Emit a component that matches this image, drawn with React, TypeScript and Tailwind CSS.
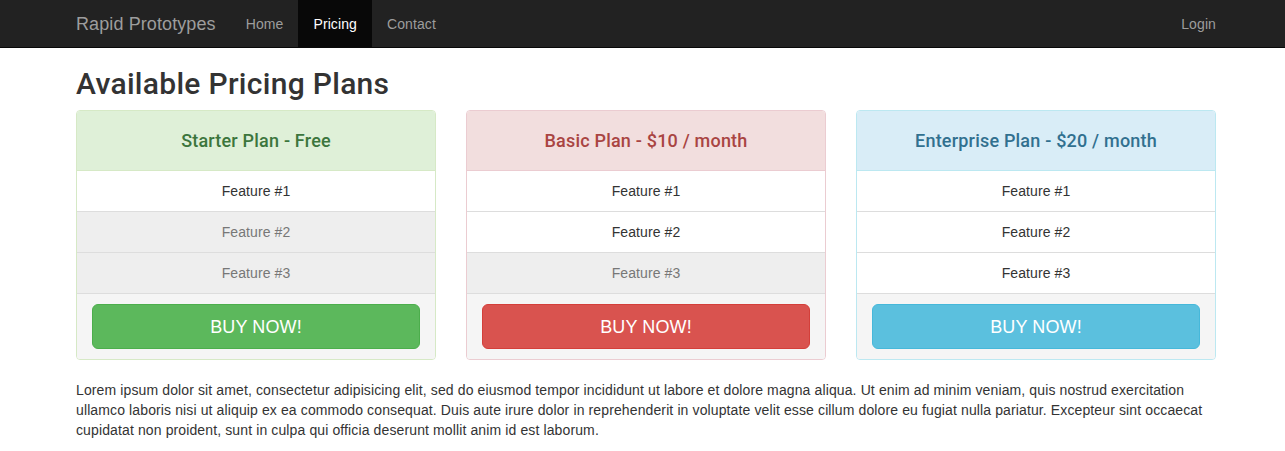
import React from "react";

const plans = [
  {
    title: "Starter Plan - Free",
    head: "bg-[#dff0d8] text-[#3c763d] border-[#d6e9c6]",
    border: "border-[#d6e9c6]",
    btn: "bg-[#5cb85c] border-[#4cae4c]",
    muted: [false, true, true],
  },
  {
    title: "Basic Plan - $10 / month",
    head: "bg-[#f2dede] text-[#a94442] border-[#ebccd1]",
    border: "border-[#ebccd1]",
    btn: "bg-[#d9534f] border-[#d43f3a]",
    muted: [false, false, true],
  },
  {
    title: "Enterprise Plan - $20 / month",
    head: "bg-[#d9edf7] text-[#31708f] border-[#bce8f1]",
    border: "border-[#bce8f1]",
    btn: "bg-[#5bc0de] border-[#46b8da]",
    muted: [false, false, false],
  },
];

const medium = { fontFamily: 'Roboto, "Liberation Sans", Arial, sans-serif' };

export default function App() {
  return (
    <div className="min-h-[451px] bg-white text-[#333] text-[14px] leading-[20px] tracking-[0.1px]" style={{ fontFamily: '"Liberation Sans", Arial, Helvetica, sans-serif' }}>
      <nav className="h-[48px] bg-[#222] border-b border-[#080808]">
        <div className="w-[1140px] ml-[76px] h-[47px] flex items-stretch">
          <a className="flex items-center pr-[15px] text-[18px] text-[#9d9d9d]">Rapid Prototypes</a>
          <ul className="flex items-stretch">
            <li className="flex items-center px-[15px] text-[#9d9d9d]">Home</li>
            <li className="flex items-center px-[15px] text-white bg-[#080808]">Pricing</li>
            <li className="flex items-center px-[15px] text-[#9d9d9d]">Contact</li>
          </ul>
          <ul className="flex items-stretch ml-auto">
            <li className="flex items-center text-[#9d9d9d]">Login</li>
          </ul>
        </div>
      </nav>
      <div className="w-[1140px] ml-[76px]">
        <h2 className="mt-[19px] mb-[10px] text-[30px] leading-[33px] font-medium tracking-[0.3px] text-[#333]" style={medium}>
          Available Pricing Plans
        </h2>
        <div className="grid grid-cols-3 gap-[30px]">
          {plans.map((p) => (
            <div key={p.title} className={`border ${p.border} rounded-[4px] overflow-hidden`}>
              <div className={`h-[60px] flex items-center justify-center border-b ${p.head} text-[18px] font-medium tracking-[0.2px]`} style={medium}>
                {p.title}
              </div>
              {[1, 2, 3].map((n, i) => (
                <div
                  key={n}
                  className={`h-[41px] flex items-center justify-center border-b border-[#ddd] ${p.muted[i] ? "bg-[#eee] text-[#777]" : "bg-white text-[#333]"}`}
                >
                  Feature #{n}
                </div>
              ))}
              <div className="h-[65px] pt-[10px] px-[15px] bg-[#f5f5f5]">
                <button className={`w-full h-[45px] rounded-[6px] border ${p.btn} text-white text-[18px]`}>BUY NOW!</button>
              </div>
            </div>
          ))}
        </div>
        <p className="mt-[20px] tracking-[0.12px]">
          Lorem ipsum dolor sit amet, consectetur adipisicing elit, sed do eiusmod tempor incididunt ut labore et dolore magna aliqua. Ut enim ad minim veniam, quis nostrud exercitation ullamco laboris nisi ut aliquip ex ea commodo consequat. Duis aute irure dolor in reprehenderit in voluptate velit esse cillum dolore eu fugiat nulla pariatur. Excepteur sint occaecat cupidatat non proident, sunt in culpa qui officia deserunt mollit anim id est laborum.
        </p>
      </div>
    </div>
  );
}
